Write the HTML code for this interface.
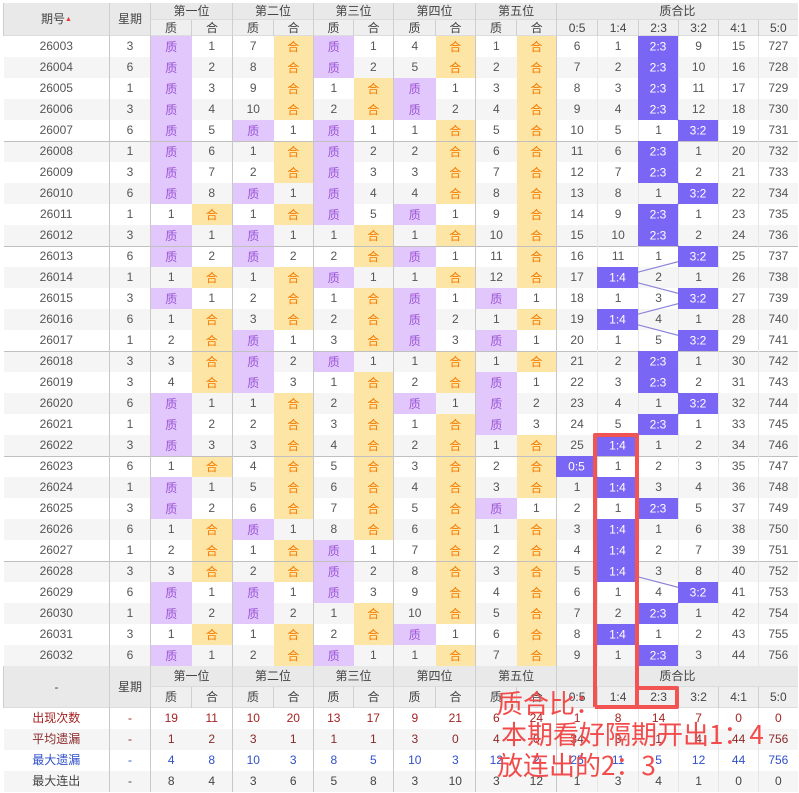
<!DOCTYPE html>
<html><head><meta charset="utf-8"><style>
*{margin:0;padding:0;box-sizing:border-box}
body{width:799px;height:793px;background:#fff;position:relative;overflow:hidden;font-family:"Liberation Sans","Noto Sans CJK SC",sans-serif;font-size:12px;color:#555}
table{position:absolute;left:3px;top:3px;width:794px;border-collapse:collapse;table-layout:fixed}
td,th{text-align:center;padding:0;height:21px;line-height:21px;font-weight:normal;white-space:nowrap;overflow:hidden;border:0}
th{background:#e9e9e9;color:#444;font-size:12px;box-shadow:inset 0 -1px #dcdcdc}
tr.h1 th{height:17px;line-height:17px}tr.h2 th{height:16px;line-height:16px;background:#efefef}
tr.f1 th{height:21px}tr.f2 th{height:21px;background:#efefef}
td:nth-child(2),td:nth-child(3),td:nth-child(5),td:nth-child(7),td:nth-child(9),td:nth-child(11),td:nth-child(13){border-left:1px solid #c8c8c8}
td:nth-child(n+14){border-left:1px solid #e6e6e6}
th{border-left:1px solid #cfcfcf}
tr.g td{background:#f5f5f5}
tr.s td{box-shadow:inset 0 1px #c0c0c0}
td.z{background:#e1c7fb !important;color:#9c55d6;font-family:"Noto Sans CJK SC",sans-serif;font-size:12px}
td.h{background:#fde5a5 !important;color:#f57a00;font-family:"Noto Sans CJK SC",sans-serif;font-size:12px}
tr.r1 td{color:#a52222}tr.r2 td{color:#8a2a2a}tr.r3 td{color:#3050c8}tr.r4 td{color:#444}
.arr{color:#e33;font-size:7px;vertical-align:2px}
.red{position:absolute;left:497px;color:#f24b4b;font-family:"Noto Sans CJK SC",sans-serif;font-size:26px;line-height:31px;white-space:nowrap}
</style></head><body>
<table>
<colgroup><col style="width:106px"><col style="width:41px"><col style="width:41px"><col style="width:41px"><col style="width:41px"><col style="width:40px"><col style="width:40px"><col style="width:40px"><col style="width:42px"><col style="width:40px"><col style="width:41px"><col style="width:40px"><col style="width:41px"><col style="width:41px"><col style="width:40px"><col style="width:40px"><col style="width:40px"><col style="width:39px"></colgroup>
<tr class="h1"><th rowspan="2">期号<span class="arr">▲</span></th><th rowspan="2">星期</th><th colspan="2">第一位</th><th colspan="2">第二位</th><th colspan="2">第三位</th><th colspan="2">第四位</th><th colspan="2">第五位</th><th colspan="6">质合比</th></tr>
<tr class="h2"><th>质</th><th>合</th><th>质</th><th>合</th><th>质</th><th>合</th><th>质</th><th>合</th><th>质</th><th>合</th><th>0:5</th><th>1:4</th><th>2:3</th><th>3:2</th><th>4:1</th><th>5:0</th></tr>
<tr><td>26003</td><td>3</td><td class="z">质</td><td>1</td><td>7</td><td class="h">合</td><td class="z">质</td><td>1</td><td>4</td><td class="h">合</td><td>1</td><td class="h">合</td><td>6</td><td>1</td><td></td><td>9</td><td>15</td><td>727</td></tr>
<tr class="g"><td>26004</td><td>6</td><td class="z">质</td><td>2</td><td>8</td><td class="h">合</td><td class="z">质</td><td>2</td><td>5</td><td class="h">合</td><td>2</td><td class="h">合</td><td>7</td><td>2</td><td></td><td>10</td><td>16</td><td>728</td></tr>
<tr><td>26005</td><td>1</td><td class="z">质</td><td>3</td><td>9</td><td class="h">合</td><td>1</td><td class="h">合</td><td class="z">质</td><td>1</td><td>3</td><td class="h">合</td><td>8</td><td>3</td><td></td><td>11</td><td>17</td><td>729</td></tr>
<tr class="g"><td>26006</td><td>3</td><td class="z">质</td><td>4</td><td>10</td><td class="h">合</td><td>2</td><td class="h">合</td><td class="z">质</td><td>2</td><td>4</td><td class="h">合</td><td>9</td><td>4</td><td></td><td>12</td><td>18</td><td>730</td></tr>
<tr><td>26007</td><td>6</td><td class="z">质</td><td>5</td><td class="z">质</td><td>1</td><td class="z">质</td><td>1</td><td>1</td><td class="h">合</td><td>5</td><td class="h">合</td><td>10</td><td>5</td><td>1</td><td></td><td>19</td><td>731</td></tr>
<tr class="g s"><td>26008</td><td>1</td><td class="z">质</td><td>6</td><td>1</td><td class="h">合</td><td class="z">质</td><td>2</td><td>2</td><td class="h">合</td><td>6</td><td class="h">合</td><td>11</td><td>6</td><td></td><td>1</td><td>20</td><td>732</td></tr>
<tr><td>26009</td><td>3</td><td class="z">质</td><td>7</td><td>2</td><td class="h">合</td><td class="z">质</td><td>3</td><td>3</td><td class="h">合</td><td>7</td><td class="h">合</td><td>12</td><td>7</td><td></td><td>2</td><td>21</td><td>733</td></tr>
<tr class="g"><td>26010</td><td>6</td><td class="z">质</td><td>8</td><td class="z">质</td><td>1</td><td class="z">质</td><td>4</td><td>4</td><td class="h">合</td><td>8</td><td class="h">合</td><td>13</td><td>8</td><td>1</td><td></td><td>22</td><td>734</td></tr>
<tr><td>26011</td><td>1</td><td>1</td><td class="h">合</td><td>1</td><td class="h">合</td><td class="z">质</td><td>5</td><td class="z">质</td><td>1</td><td>9</td><td class="h">合</td><td>14</td><td>9</td><td></td><td>1</td><td>23</td><td>735</td></tr>
<tr class="g"><td>26012</td><td>3</td><td class="z">质</td><td>1</td><td class="z">质</td><td>1</td><td>1</td><td class="h">合</td><td>1</td><td class="h">合</td><td>10</td><td class="h">合</td><td>15</td><td>10</td><td></td><td>2</td><td>24</td><td>736</td></tr>
<tr class="s"><td>26013</td><td>6</td><td class="z">质</td><td>2</td><td class="z">质</td><td>2</td><td>2</td><td class="h">合</td><td class="z">质</td><td>1</td><td>11</td><td class="h">合</td><td>16</td><td>11</td><td>1</td><td></td><td>25</td><td>737</td></tr>
<tr class="g"><td>26014</td><td>1</td><td>1</td><td class="h">合</td><td>1</td><td class="h">合</td><td class="z">质</td><td>1</td><td>1</td><td class="h">合</td><td>12</td><td class="h">合</td><td>17</td><td></td><td>2</td><td>1</td><td>26</td><td>738</td></tr>
<tr><td>26015</td><td>3</td><td class="z">质</td><td>1</td><td>2</td><td class="h">合</td><td>1</td><td class="h">合</td><td class="z">质</td><td>1</td><td class="z">质</td><td>1</td><td>18</td><td>1</td><td>3</td><td></td><td>27</td><td>739</td></tr>
<tr class="g"><td>26016</td><td>6</td><td>1</td><td class="h">合</td><td>3</td><td class="h">合</td><td>2</td><td class="h">合</td><td class="z">质</td><td>2</td><td>1</td><td class="h">合</td><td>19</td><td></td><td>4</td><td>1</td><td>28</td><td>740</td></tr>
<tr><td>26017</td><td>1</td><td>2</td><td class="h">合</td><td class="z">质</td><td>1</td><td>3</td><td class="h">合</td><td class="z">质</td><td>3</td><td class="z">质</td><td>1</td><td>20</td><td>1</td><td>5</td><td></td><td>29</td><td>741</td></tr>
<tr class="g s"><td>26018</td><td>3</td><td>3</td><td class="h">合</td><td class="z">质</td><td>2</td><td class="z">质</td><td>1</td><td>1</td><td class="h">合</td><td>1</td><td class="h">合</td><td>21</td><td>2</td><td></td><td>1</td><td>30</td><td>742</td></tr>
<tr><td>26019</td><td>3</td><td>4</td><td class="h">合</td><td class="z">质</td><td>3</td><td>1</td><td class="h">合</td><td>2</td><td class="h">合</td><td class="z">质</td><td>1</td><td>22</td><td>3</td><td></td><td>2</td><td>31</td><td>743</td></tr>
<tr class="g"><td>26020</td><td>6</td><td class="z">质</td><td>1</td><td>1</td><td class="h">合</td><td>2</td><td class="h">合</td><td class="z">质</td><td>1</td><td class="z">质</td><td>2</td><td>23</td><td>4</td><td>1</td><td></td><td>32</td><td>744</td></tr>
<tr><td>26021</td><td>1</td><td class="z">质</td><td>2</td><td>2</td><td class="h">合</td><td>3</td><td class="h">合</td><td>1</td><td class="h">合</td><td class="z">质</td><td>3</td><td>24</td><td>5</td><td></td><td>1</td><td>33</td><td>745</td></tr>
<tr class="g"><td>26022</td><td>3</td><td class="z">质</td><td>3</td><td>3</td><td class="h">合</td><td>4</td><td class="h">合</td><td>2</td><td class="h">合</td><td>1</td><td class="h">合</td><td>25</td><td></td><td>1</td><td>2</td><td>34</td><td>746</td></tr>
<tr class="s"><td>26023</td><td>6</td><td>1</td><td class="h">合</td><td>4</td><td class="h">合</td><td>5</td><td class="h">合</td><td>3</td><td class="h">合</td><td>2</td><td class="h">合</td><td></td><td>1</td><td>2</td><td>3</td><td>35</td><td>747</td></tr>
<tr class="g"><td>26024</td><td>1</td><td class="z">质</td><td>1</td><td>5</td><td class="h">合</td><td>6</td><td class="h">合</td><td>4</td><td class="h">合</td><td>3</td><td class="h">合</td><td>1</td><td></td><td>3</td><td>4</td><td>36</td><td>748</td></tr>
<tr><td>26025</td><td>3</td><td class="z">质</td><td>2</td><td>6</td><td class="h">合</td><td>7</td><td class="h">合</td><td>5</td><td class="h">合</td><td class="z">质</td><td>1</td><td>2</td><td>1</td><td></td><td>5</td><td>37</td><td>749</td></tr>
<tr class="g"><td>26026</td><td>6</td><td>1</td><td class="h">合</td><td class="z">质</td><td>1</td><td>8</td><td class="h">合</td><td>6</td><td class="h">合</td><td>1</td><td class="h">合</td><td>3</td><td></td><td>1</td><td>6</td><td>38</td><td>750</td></tr>
<tr><td>26027</td><td>1</td><td>2</td><td class="h">合</td><td>1</td><td class="h">合</td><td class="z">质</td><td>1</td><td>7</td><td class="h">合</td><td>2</td><td class="h">合</td><td>4</td><td></td><td>2</td><td>7</td><td>39</td><td>751</td></tr>
<tr class="g s"><td>26028</td><td>3</td><td>3</td><td class="h">合</td><td>2</td><td class="h">合</td><td class="z">质</td><td>2</td><td>8</td><td class="h">合</td><td>3</td><td class="h">合</td><td>5</td><td></td><td>3</td><td>8</td><td>40</td><td>752</td></tr>
<tr><td>26029</td><td>6</td><td class="z">质</td><td>1</td><td class="z">质</td><td>1</td><td class="z">质</td><td>3</td><td>9</td><td class="h">合</td><td>4</td><td class="h">合</td><td>6</td><td>1</td><td>4</td><td></td><td>41</td><td>753</td></tr>
<tr class="g"><td>26030</td><td>1</td><td class="z">质</td><td>2</td><td class="z">质</td><td>2</td><td>1</td><td class="h">合</td><td>10</td><td class="h">合</td><td>5</td><td class="h">合</td><td>7</td><td>2</td><td></td><td>1</td><td>42</td><td>754</td></tr>
<tr><td>26031</td><td>3</td><td>1</td><td class="h">合</td><td>1</td><td class="h">合</td><td>2</td><td class="h">合</td><td class="z">质</td><td>1</td><td>6</td><td class="h">合</td><td>8</td><td></td><td>1</td><td>2</td><td>43</td><td>755</td></tr>
<tr class="g"><td>26032</td><td>6</td><td class="z">质</td><td>1</td><td>2</td><td class="h">合</td><td class="z">质</td><td>1</td><td>1</td><td class="h">合</td><td>7</td><td class="h">合</td><td>9</td><td>1</td><td></td><td>3</td><td>44</td><td>756</td></tr>
<tr class="f1"><th rowspan="2">-</th><th rowspan="2">星期</th><th colspan="2">第一位</th><th colspan="2">第二位</th><th colspan="2">第三位</th><th colspan="2">第四位</th><th colspan="2">第五位</th><th colspan="6">质合比</th></tr>
<tr class="f2"><th>质</th><th>合</th><th>质</th><th>合</th><th>质</th><th>合</th><th>质</th><th>合</th><th>质</th><th>合</th><th>0:5</th><th>1:4</th><th>2:3</th><th>3:2</th><th>4:1</th><th>5:0</th></tr>
<tr class="r1"><td>出现次数</td><td>-</td><td>19</td><td>11</td><td>10</td><td>20</td><td>13</td><td>17</td><td>9</td><td>21</td><td>6</td><td>24</td><td>1</td><td>8</td><td>14</td><td>7</td><td>0</td><td>0</td></tr>
<tr class="r2 g"><td>平均遗漏</td><td>-</td><td>1</td><td>2</td><td>3</td><td>1</td><td>1</td><td>1</td><td>3</td><td>0</td><td>4</td><td>0</td><td>34</td><td>3</td><td>1</td><td>4</td><td>44</td><td>756</td></tr>
<tr class="r3"><td>最大遗漏</td><td>-</td><td>4</td><td>8</td><td>10</td><td>3</td><td>8</td><td>5</td><td>10</td><td>3</td><td>12</td><td>2</td><td>25</td><td>11</td><td>5</td><td>12</td><td>44</td><td>756</td></tr>
<tr class="r4 g"><td>最大连出</td><td>-</td><td>8</td><td>4</td><td>3</td><td>6</td><td>5</td><td>8</td><td>3</td><td>10</td><td>3</td><td>12</td><td>1</td><td>3</td><td>4</td><td>1</td><td>0</td><td>0</td></tr>
</table>
<svg width="799" height="793" style="position:absolute;left:0;top:0" font-family="Liberation Sans, sans-serif" font-size="12">
<polyline fill="none" stroke="#8a82da" stroke-width="1.2" points="658,46.5 658,67.5 658,88.5 658,109.5 698,130.5 658,151.5 658,172.5 698,193.5 658,214.5 658,235.5 698,256.5 617.5,277.5 698,298.5 617.5,319.5 698,340.5 658,361.5 658,382.5 698,403.5 658,424.5 617.5,445.5 576.5,466.5 617.5,487.5 658,508.5 617.5,529.5 617.5,550.5 617.5,571.5 698,592.5 658,613.5 617.5,634.5 658,655.5"/>
<g fill="#7a66f4">
<rect x="638" y="36" width="40" height="21"/><rect x="638" y="57" width="40" height="21"/><rect x="638" y="78" width="40" height="21"/><rect x="638" y="99" width="40" height="21"/><rect x="678" y="120" width="40" height="21"/><rect x="638" y="141" width="40" height="21"/><rect x="638" y="162" width="40" height="21"/><rect x="678" y="183" width="40" height="21"/><rect x="638" y="204" width="40" height="21"/><rect x="638" y="225" width="40" height="21"/><rect x="678" y="246" width="40" height="21"/><rect x="597" y="267" width="41" height="21"/><rect x="678" y="288" width="40" height="21"/><rect x="597" y="309" width="41" height="21"/><rect x="678" y="330" width="40" height="21"/><rect x="638" y="351" width="40" height="21"/><rect x="638" y="372" width="40" height="21"/><rect x="678" y="393" width="40" height="21"/><rect x="638" y="414" width="40" height="21"/><rect x="597" y="435" width="41" height="21"/><rect x="556" y="456" width="41" height="21"/><rect x="597" y="477" width="41" height="21"/><rect x="638" y="498" width="40" height="21"/><rect x="597" y="519" width="41" height="21"/><rect x="597" y="540" width="41" height="21"/><rect x="597" y="561" width="41" height="21"/><rect x="678" y="582" width="40" height="21"/><rect x="638" y="603" width="40" height="21"/><rect x="597" y="624" width="41" height="21"/><rect x="638" y="645" width="40" height="21"/>
</g>
<g fill="#fff" text-anchor="middle">
<text x="658" y="50.5">2:3</text><text x="658" y="71.5">2:3</text><text x="658" y="92.5">2:3</text><text x="658" y="113.5">2:3</text><text x="698" y="134.5">3:2</text><text x="658" y="155.5">2:3</text><text x="658" y="176.5">2:3</text><text x="698" y="197.5">3:2</text><text x="658" y="218.5">2:3</text><text x="658" y="239.5">2:3</text><text x="698" y="260.5">3:2</text><text x="617.5" y="281.5">1:4</text><text x="698" y="302.5">3:2</text><text x="617.5" y="323.5">1:4</text><text x="698" y="344.5">3:2</text><text x="658" y="365.5">2:3</text><text x="658" y="386.5">2:3</text><text x="698" y="407.5">3:2</text><text x="658" y="428.5">2:3</text><text x="617.5" y="449.5">1:4</text><text x="576.5" y="470.5">0:5</text><text x="617.5" y="491.5">1:4</text><text x="658" y="512.5">2:3</text><text x="617.5" y="533.5">1:4</text><text x="617.5" y="554.5">1:4</text><text x="617.5" y="575.5">1:4</text><text x="698" y="596.5">3:2</text><text x="658" y="617.5">2:3</text><text x="617.5" y="638.5">1:4</text><text x="658" y="659.5">2:3</text>
</g>
<g stroke="#f25454" stroke-width="4" fill="none" stroke-linejoin="round">
<path d="M595,707 L595,435 L637,435 L637,707"/>
<path d="M637,688 L677,688 L677,707 L595,707"/>
</g>
</svg>
<div class="red" style="top:687px">质合比：</div>
<div class="red" style="top:718px;left:501px">本期看好隔期开出1：4</div>
<div class="red" style="top:749px">放连出的2：3</div>
</body></html>
